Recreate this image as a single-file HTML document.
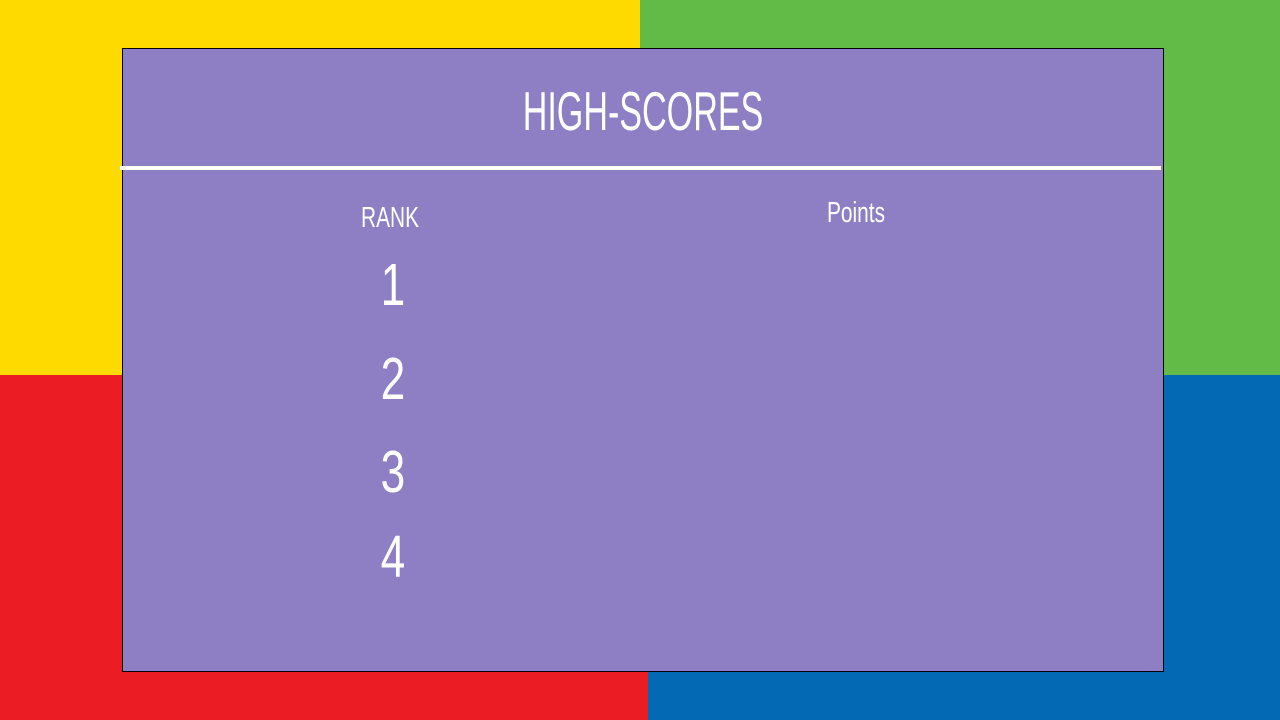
<!DOCTYPE html>
<html><head><style>
*{margin:0;padding:0}
body{width:1280px;height:720px;position:relative;overflow:hidden;font-family:"Liberation Sans",sans-serif;color:#fff}
.q{position:absolute}
.t{position:absolute;white-space:nowrap;transform-origin:center top;line-height:1}
.n{left:343px;width:100px;text-align:center;font-size:59px;transform:scaleX(0.75)}
</style></head><body>
<div class="q" style="left:0;top:0;width:640px;height:375px;background:#FFDA00"></div>
<div class="q" style="left:640px;top:0;width:640px;height:375px;background:#62BB47"></div>
<div class="q" style="left:0;top:375px;width:648px;height:345px;background:#EB1C24"></div>
<div class="q" style="left:648px;top:375px;width:632px;height:345px;background:#0369B5"></div>
<div class="q" style="left:122px;top:48px;width:1040px;height:622px;background:#8E7EC3;border:1px solid #000"></div>
<div class="q" style="left:120px;top:166px;width:1041px;height:4px;background:#fff"></div>
<div class="t" style="left:443px;width:400px;text-align:center;top:84px;font-size:55px;transform:scaleX(0.62)">HIGH-SCORES</div>
<div class="t" style="left:340px;width:100px;text-align:center;top:204px;font-size:29px;transform:scaleX(0.72)">RANK</div>
<div class="t" style="left:806px;width:100px;text-align:center;top:199px;font-size:29px;transform:scaleX(0.72)">Points</div>
<div class="t n" style="top:256px">1</div>
<div class="t n" style="top:350px">2</div>
<div class="t n" style="top:443px">3</div>
<div class="t n" style="top:528px">4</div>
</body></html>
